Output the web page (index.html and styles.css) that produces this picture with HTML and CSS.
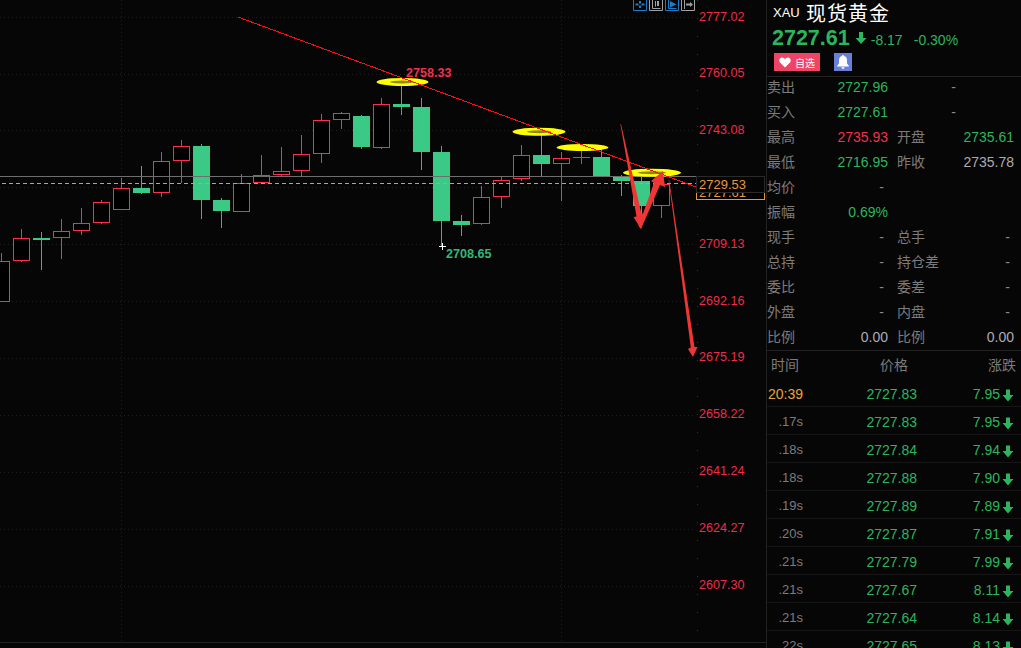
FILE: index.html
```html
<!DOCTYPE html>
<html lang="zh-CN">
<head>
    <meta charset="UTF-8">
    <title>XAU 现货黄金</title>
    <link rel="stylesheet" href="styles.css">
</head>
<body>
    <div class="terminal">
        <section class="chart">
            <svg class="chart-svg" width="766" height="648" viewBox="0 0 766 648">
                <!-- grid -->
                <g class="grid">
                    <path d="M0 17.5H696M0 74.5H696M0 130.5H696M0 187.5H696M0 244.5H696M0 301.5H696M0 358.5H696M0 415.5H696M0 472.5H696M0 529.5H696M0 586.5H696"/>
                    <path d="M121.5 0V642M561.5 0V642"/>
                    <path class="grid-axis" d="M697.5 0V642"/>
                </g>

                <!-- candles: wick then body, 20px apart -->
                <g class="up">
                    <path d="M1.5 253V262M21.5 229V262M61.5 219V259M81.5 208V235M101.5 200V224M121.5 178V190M161.5 152V197M181.5 140V183M241.5 174V212M261.5 155V183M281.5 147V176M301.5 135V176M321.5 114V163M341.5 112V129M381.5 98V149M481.5 186V225M501.5 177V208M521.5 145V181M561.5 152V201M581.5 150V164M661.5 176V218"/>
                    <rect x="-6.5" y="261.5" width="16" height="40"/>
                    <rect x="13.5" y="238.5" width="16" height="22"/>
                    <rect x="53.5" y="231.5" width="16" height="6"/>
                    <rect x="73.5" y="223.5" width="16" height="7"/>
                    <rect x="93.5" y="202.5" width="16" height="20"/>
                    <rect x="113.5" y="188.5" width="16" height="21"/>
                    <rect x="153.5" y="161.5" width="16" height="31"/>
                    <rect x="173.5" y="146.5" width="16" height="14"/>
                    <rect x="233.5" y="183.5" width="16" height="28"/>
                    <rect x="253.5" y="175.5" width="16" height="7"/>
                    <rect x="273.5" y="171.5" width="16" height="3"/>
                    <rect x="293.5" y="154.5" width="16" height="16"/>
                    <rect x="313.5" y="120.5" width="16" height="33"/>
                    <rect x="333.5" y="113.5" width="16" height="6"/>
                    <rect x="373.5" y="104.5" width="16" height="43"/>
                    <rect x="473.5" y="197.5" width="16" height="26"/>
                    <rect x="493.5" y="180.5" width="16" height="16"/>
                    <rect x="513.5" y="155.5" width="16" height="23"/>
                    <rect x="553.5" y="158.5" width="16" height="5"/>
                    <path d="M573 157.5H590"/>
                    <rect x="653.5" y="184.5" width="16" height="21"/>
                </g>
                <g class="down">
                    <path d="M41.5 232V270M141.5 166V194M201.5 144V219M221.5 198V228M361.5 115V149M401.5 83V115M421.5 98V170M441.5 146V246M461.5 215V236M541.5 132V176M601.5 150V176M621.5 175V196M641.5 177V217"/>
                    <rect x="33" y="238" width="17" height="2"/>
                    <rect x="133" y="188" width="17" height="5"/>
                    <rect x="193" y="146" width="17" height="54"/>
                    <rect x="213" y="200" width="17" height="11"/>
                    <rect x="353" y="116" width="17" height="31"/>
                    <rect x="393" y="104" width="17" height="3"/>
                    <rect x="413" y="107" width="17" height="45"/>
                    <rect x="433" y="152" width="17" height="69"/>
                    <rect x="453" y="221" width="17" height="4"/>
                    <rect x="533" y="155" width="17" height="9"/>
                    <rect x="593" y="157" width="17" height="19"/>
                    <rect x="613" y="177" width="17" height="4"/>
                    <rect x="633" y="181" width="17" height="25"/>
                </g>

                <!-- last price lines -->
                <path class="last-line" d="M0 176.5H696"/>
                <path class="prev-line" d="M2 183.5H696"/>

                <!-- hand drawn markup -->
                <g class="marks">
                    <ellipse cx="402.5" cy="82" rx="26" ry="4"/>
                    <ellipse cx="539" cy="131.8" rx="26.5" ry="4"/>
                    <ellipse cx="582.5" cy="147.5" rx="26" ry="3.5"/>
                    <ellipse cx="652" cy="172.8" rx="29" ry="4"/>
                </g>
                <g class="marks-core">
                    <ellipse cx="402" cy="82" rx="12" ry="1.5"/>
                    <ellipse cx="539" cy="131.8" rx="12" ry="1.5"/>
                    <ellipse cx="652" cy="172.8" rx="14" ry="1.5"/>
                </g>
                <path class="trend" d="M238 17L696 187"/>
                <g class="arrows">
                    <polygon points="620.4,124 621,124 641.5,214 644,213 641,229 633.5,217 636.5,216.5"/>
                    <polygon points="641,229 638.5,226 654,183 651,181 663,171 665,187 660,185"/>
                    <polygon points="668.6,180 669.2,180 694.5,347 697.5,347 693,357 688,349 690.8,347.5"/>
                </g>

                <!-- extreme labels -->
                <path class="cross" d="M439 246.5H446M442.5 243V250"/>
                <text class="peak" x="406" y="77">2758.33</text>
                <text class="trough" x="446" y="258">2708.65</text>

                <!-- price axis -->
                <g class="axis">
                    <text x="699" y="21">2777.02</text>
                    <text x="699" y="77">2760.05</text>
                    <text x="699" y="134">2743.08</text>
                    <text x="699" y="248">2709.13</text>
                    <text x="699" y="305">2692.16</text>
                    <text x="699" y="361">2675.19</text>
                    <text x="699" y="418">2658.22</text>
                    <text x="699" y="475">2641.24</text>
                    <text x="699" y="532">2624.27</text>
                    <text x="699" y="589">2607.30</text>
                </g>

                <!-- price tags -->
                <rect class="tag-low" x="696.5" y="186.5" width="68" height="13"/>
                <text class="tag-text" x="699" y="197">2727.61</text>
                <rect class="tag-high" x="696.5" y="176.5" width="68" height="16"/>
                <text class="tag-text" x="699" y="189">2729.53</text>

                <!-- toolbar -->
                <g class="tool tool-on">
                    <path d="M633.5 -1H646.5V10.5H633.5Z"/>
                    <path class="tool-bold" d="M640 1V3.5M640 5.5V8M635.5 4.5H638.5M641.5 4.5H644.5"/>
                </g>
                <g class="tool">
                    <path d="M649.5 -1H662.5V10.5H649.5ZM652.5 0V8.5H660.5M655.5 1V6.5"/>
                    <path class="tool-bold" d="M658 1V6"/>
                </g>
                <g class="tool tool-on">
                    <path d="M665.5 -1H678.5V10.5H665.5ZM668.5 0V8.5H676.5"/>
                    <polygon class="tool-fill" points="670,1 676.5,4.5 670,7.5"/>
                </g>
                <g class="tool">
                    <path d="M681.5 -1H694.5V10.5H681.5ZM684.5 0V9"/>
                    <path class="tool-bold" d="M686 4.5H691"/>
                    <polygon class="tool-grey" points="690,2 693,4.5 690,7"/>
                </g>

                <path class="chart-foot" d="M0 642.5H766"/>
            </svg>
        </section>

        <aside class="panel">
            <header class="quote">
                <div class="title">
                    <span class="symbol">XAU</span>
                    <span class="name">现货黄金</span>
                </div>
                <div class="price-row">
                    <span class="price">2727.61</span>
                    <svg class="price-arrow" width="12" height="14" viewBox="0 0 12 14">
                        <path d="M4 1H8V7H11.5L6 13L.5 7H4Z"/>
                    </svg>
                    <span class="change">-8.17</span>
                    <span class="percent">-0.30%</span>
                </div>
                <div class="actions">
                    <button class="btn-fav" type="button">
                        <svg width="12" height="11" viewBox="0 0 12 11">
                            <path d="M6 10.5L1 5.6C-.6 3.8 .5 .6 3 .6C4.4 .6 5.4 1.4 6 2.4C6.6 1.4 7.6 .6 9 .6C11.5 .6 12.6 3.8 11 5.6Z"/>
                        </svg>
                        自选
                    </button>
                    <button class="btn-bell" type="button">
                        <svg width="12" height="14" viewBox="0 0 12 14">
                            <path d="M6 0C6.7 0 7 .5 7 1.1C9 1.6 10 3.2 10 5.2V8.5L11.8 10.8V11.5H.2V10.8L2 8.5V5.2C2 3.2 3 1.6 5 1.1C5 .5 5.3 0 6 0ZM4.4 12.3H7.6C7.4 13.3 6.8 14 6 14C5.2 14 4.6 13.3 4.4 12.3Z"/>
                        </svg>
                    </button>
                </div>
            </header>

            <div class="info">
                <div class="info-row"><span class="label">卖出</span><span class="val green">2727.96</span><span></span><span class="val mid">-</span></div>
                <div class="info-row"><span class="label">买入</span><span class="val green">2727.61</span><span></span><span class="val mid">-</span></div>
                <div class="info-row"><span class="label">最高</span><span class="val red">2735.93</span><span class="label">开盘</span><span class="val green">2735.61</span></div>
                <div class="info-row"><span class="label">最低</span><span class="val green">2716.95</span><span class="label">昨收</span><span class="val silver">2735.78</span></div>
                <div class="info-row"><span class="label">均价</span><span class="val nil">-</span></div>
                <div class="info-row"><span class="label">振幅</span><span class="val green">0.69%</span></div>
                <div class="info-row"><span class="label">现手</span><span class="val nil">-</span><span class="label">总手</span><span class="val nil">-</span></div>
                <div class="info-row"><span class="label">总持</span><span class="val nil">-</span><span class="label">持仓差</span><span class="val nil">-</span></div>
                <div class="info-row"><span class="label">委比</span><span class="val nil">-</span><span class="label">委差</span><span class="val nil">-</span></div>
                <div class="info-row"><span class="label">外盘</span><span class="val nil">-</span><span class="label">内盘</span><span class="val nil">-</span></div>
                <div class="info-row"><span class="label">比例</span><span class="val silver">0.00</span><span class="label">比例</span><span class="val silver">0.00</span></div>
            </div>

            <div class="tape">
                <div class="tape-head"><span>时间</span><span>价格</span><span>涨跌</span></div>
                <div class="tape-row"><span class="time now">20:39</span><span class="tick">2727.83</span><span class="tick">7.95</span><svg class="tick-arrow" width="12" height="13"><use href="#down"/></svg></div>
                <div class="tape-row"><span class="time">.17s</span><span class="tick">2727.83</span><span class="tick">7.95</span><svg class="tick-arrow" width="12" height="13"><use href="#down"/></svg></div>
                <div class="tape-row"><span class="time">.18s</span><span class="tick">2727.84</span><span class="tick">7.94</span><svg class="tick-arrow" width="12" height="13"><use href="#down"/></svg></div>
                <div class="tape-row"><span class="time">.18s</span><span class="tick">2727.88</span><span class="tick">7.90</span><svg class="tick-arrow" width="12" height="13"><use href="#down"/></svg></div>
                <div class="tape-row"><span class="time">.19s</span><span class="tick">2727.89</span><span class="tick">7.89</span><svg class="tick-arrow" width="12" height="13"><use href="#down"/></svg></div>
                <div class="tape-row"><span class="time">.20s</span><span class="tick">2727.87</span><span class="tick">7.91</span><svg class="tick-arrow" width="12" height="13"><use href="#down"/></svg></div>
                <div class="tape-row"><span class="time">.21s</span><span class="tick">2727.79</span><span class="tick">7.99</span><svg class="tick-arrow" width="12" height="13"><use href="#down"/></svg></div>
                <div class="tape-row"><span class="time">.21s</span><span class="tick">2727.67</span><span class="tick">8.11</span><svg class="tick-arrow" width="12" height="13"><use href="#down"/></svg></div>
                <div class="tape-row"><span class="time">.21s</span><span class="tick">2727.64</span><span class="tick">8.14</span><svg class="tick-arrow" width="12" height="13"><use href="#down"/></svg></div>
                <div class="tape-row"><span class="time">.22s</span><span class="tick">2727.65</span><span class="tick">8.13</span><svg class="tick-arrow" width="12" height="13"><use href="#down"/></svg></div>
            </div>
        </aside>
    </div>

    <svg class="defs" width="0" height="0">
        <symbol id="down" viewBox="0 0 12 13">
            <path d="M4 .5H8V6H11.5L6 12.5L.5 6H4Z"/>
        </symbol>
    </svg>
</body>
</html>
```

FILE: styles.css
```css
body {
    margin: 0;
    background-color: #060606;
    font-family: "Liberation Sans", "Noto Sans CJK SC", sans-serif;
    overflow: hidden;
}
.terminal {
    display: flex;
    width: 1021px;
    height: 648px;
    overflow: hidden;
}
.defs {
    position: absolute;
}

/* chart */
.chart {
    flex: 0 0 766px;
    height: 648px;
}
.chart-svg {
    display: block;
}
.grid path {
    fill: none;
    stroke: #1f1f1f;
    stroke-dasharray: 1 3;
}
.grid .grid-axis {
    stroke: #333;
    stroke-dasharray: 1 17;
}
.up path,
.up rect {
    fill: #000;
    stroke: #ff2d50;
    shape-rendering: crispEdges;
}
.down rect {
    fill: #3bca85;
}
.down path {
    fill: none;
    stroke: #3bb57c;
}
.last-line {
    stroke: #6e6e6e;
}
.prev-line {
    stroke: #e8993c;
    stroke-dasharray: 4 3;
}
.marks ellipse {
    fill: #ffff00;
}
.marks-core ellipse {
    fill: #8d8a10;
}
.trend {
    stroke: #ff1010;
    shape-rendering: crispEdges;
}
.arrows polygon {
    fill: #ee3636;
}
.peak {
    fill: #f0304f;
    font-size: 12.6px;
    font-weight: bold;
}
.trough {
    fill: #34b878;
    font-size: 12.6px;
    font-weight: bold;
}
.cross {
    stroke: #fff;
}
.axis text {
    fill: #ee2c48;
    font-size: 12.6px;
}
.tag-low {
    fill: #000;
    stroke: #e8993c;
}
.tag-high {
    fill: #050505;
    stroke: #2a2a2a;
}
.tag-text {
    fill: #e8993c;
    font-size: 13px;
}
.tool path {
    fill: none;
    stroke: #a0a0a0;
}
.tool-on path {
    stroke: #1c7cc8;
}
.tool .tool-bold {
    stroke-width: 2;
}
.tool-fill {
    fill: #1c7cc8;
}
.tool-grey {
    fill: #a0a0a0;
}
.chart-foot {
    stroke: #222;
}

/* right panel */
.panel {
    flex: 0 0 255px;
    height: 648px;
    box-sizing: border-box;
    border-left: 1px solid #222;
    overflow: hidden;
}
.quote {
    height: 76px;
    padding-left: 5px;
    box-sizing: content-box;
    border-bottom: 1px solid #222;
}
.title {
    display: flex;
    align-items: center;
    height: 24px;
    color: #fff;
}
.symbol {
    width: 33px;
    margin-left: 1px;
    font-size: 13px;
}
.name {
    font-size: 20px;
    letter-spacing: 1px;
}
.price-row {
    display: flex;
    align-items: center;
    height: 28px;
    color: #2db55d;
}
.price {
    font-size: 21.5px;
    font-weight: bold;
}
.price-arrow {
    margin: 0 4px 0 5px;
    fill: #2db55d;
}
.change {
    width: 43px;
    font-size: 14px;
    padding-top: 4px;
}
.percent {
    font-size: 14px;
    padding-top: 4px;
}
.actions {
    display: flex;
    gap: 14px;
    margin-left: 2px;
    margin-top: 1px;
}
.btn-fav,
.btn-bell {
    display: flex;
    align-items: center;
    justify-content: center;
    height: 18px;
    border: none;
    padding: 0;
    color: #fff;
    font-family: inherit;
}
.btn-fav {
    gap: 4px;
    width: 46px;
    font-size: 10px;
    background-color: #ee4466;
}
.btn-bell {
    width: 18px;
    background-color: #6a80d8;
}
.btn-fav svg,
.btn-bell svg {
    fill: #fff;
}

.info {
    height: 273px;
    border-bottom: 1px solid #222;
    overflow: hidden;
}
.info-row {
    display: grid;
    grid-template-columns: 30px 91px 39px 87px;
    height: 25px;
    line-height: 21px;
    font-size: 14px;
}
.label {
    color: #7c7c7c;
}
.info-row .label:nth-child(3) {
    padding-left: 9px;
    white-space: nowrap;
}
.val {
    text-align: right;
}
.green {
    color: #2db55d;
}
.red {
    color: #f5304f;
}
.silver {
    color: #acacb4;
}
.nil {
    color: #8a8a8a;
    padding-right: 4px;
}
.mid {
    color: #8a8a8a;
    margin-right: 58px;
}

.tape-head {
    display: flex;
    gap: 81px;
    height: 28px;
    padding-left: 4px;
    line-height: 28px;
    font-size: 14px;
    color: #7c7c7c;
}
.tape-head span:last-child {
    margin-left: -1px;
}
.tape-row {
    display: grid;
    grid-template-columns: 36px 114px 83px 14px;
    align-items: start;
    height: 28px;
    box-sizing: border-box;
    border-bottom: 1px solid #161616;
    line-height: 30px;
    font-size: 14px;
}
.time {
    text-align: right;
    font-size: 13px;
    color: #7c7c7c;
}
.now {
    font-size: 14px;
    color: #e8a33c;
}
.tick {
    text-align: right;
    color: #2db55d;
}
.tick-arrow {
    margin: 10px 0 0 2px;
    fill: #2db55d;
}
```
